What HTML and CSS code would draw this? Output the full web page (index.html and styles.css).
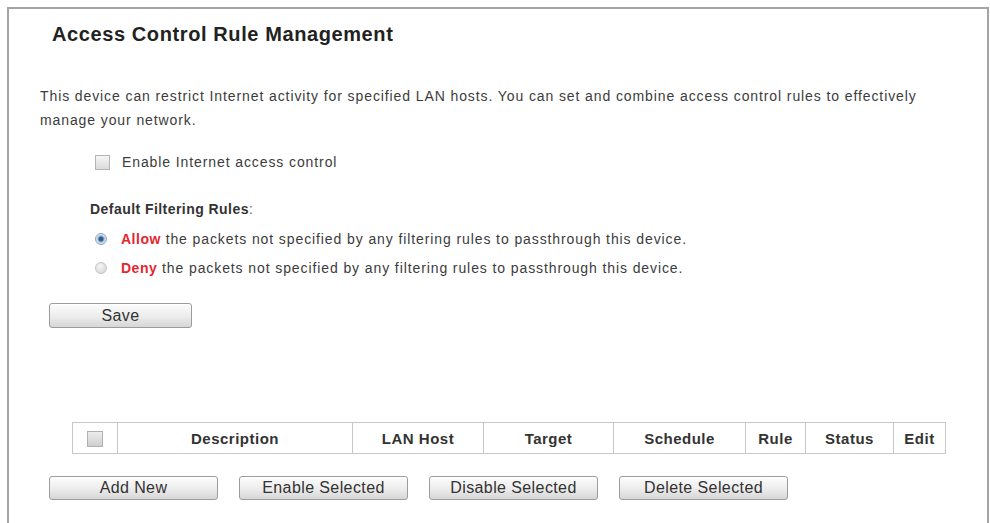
FILE: index.html
```html
<!DOCTYPE html>
<html lang="en">
<head>
  <meta charset="UTF-8">
  <title>Access Control Rule Management</title>
  <link rel="stylesheet" href="styles.css">
</head>
<body>
  <div class="panel">
    <h1>Access Control Rule Management</h1>
    <p class="intro">This device can restrict Internet activity for specified LAN hosts. You can set and combine access control rules to effectively manage your network.</p>

    <label class="enable-row">
      <span class="check"></span>
      Enable Internet access control
    </label>

    <div class="filter">
      <div class="filter-title"><b>Default Filtering Rules</b>:</div>
      <div class="radio-row"><span class="radio on"></span><span class="red">Allow</span>&nbsp;the packets not specified by any filtering rules to passthrough this device.</div>
      <div class="radio-row"><span class="radio"></span><span class="red">Deny</span>&nbsp;the packets not specified by any filtering rules to passthrough this device.</div>
    </div>

    <button class="btn save">Save</button>

    <table class="rules">
      <tr>
        <th class="c-check"><span class="check small"></span></th>
        <th class="c-desc">Description</th>
        <th class="c-host">LAN Host</th>
        <th class="c-target">Target</th>
        <th class="c-sched">Schedule</th>
        <th class="c-rule">Rule</th>
        <th class="c-status">Status</th>
        <th class="c-edit">Edit</th>
      </tr>
    </table>

    <div class="actions">
      <button class="btn wide">Add New</button>
      <button class="btn wide">Enable Selected</button>
      <button class="btn wide">Disable Selected</button>
      <button class="btn wide">Delete Selected</button>
    </div>
  </div>
</body>
</html>
```

FILE: styles.css
```css
body {
  margin: 0;
  background: #fff;
  font-family: "Liberation Sans", Arial, sans-serif;
  color: #333;
}
.panel {
  margin: 7px 0 0 7px;
  width: 982px;
  height: 540px;
  border: 2px solid #a4a4a4;
  border-bottom: none;
  padding: 13px 0 0 31px;
  box-sizing: border-box;
}
h1 {
  margin: 0 0 0 12px;
  font-size: 20px;
  line-height: 24px;
  letter-spacing: 0.6px;
  color: #222;
}
.intro {
  margin: 38px 0 0;
  width: 900px;
  font-size: 14px;
  line-height: 24px;
  letter-spacing: 0.9px;
  color: #3c3c3c;
}
.enable-row {
  display: flex;
  align-items: center;
  margin: 23px 0 0 55px;
  font-size: 14px;
  line-height: 15px;
  letter-spacing: 0.9px;
  color: #3c3c3c;
}
.check {
  display: inline-block;
  width: 13px;
  height: 13px;
  margin-right: 12px;
  border: 1px solid #b4b4b4;
  background: linear-gradient(#f6f6f6, #dadada);
}
.filter {
  margin: 29px 0 0 50px;
}
.filter-title {
  font-size: 14px;
  line-height: 20px;
  letter-spacing: 0.45px;
  color: #666;
  margin-bottom: 5px;
}
.filter-title b {
  color: #333;
}
.radio-row {
  display: flex;
  align-items: center;
  height: 29px;
  margin-left: 5px;
  font-size: 14px;
  letter-spacing: 0.9px;
  color: #3c3c3c;
}
.radio {
  width: 10px;
  height: 10px;
  border-radius: 50%;
  margin-right: 14px;
  border: 1px solid #c4c4c4;
  background: radial-gradient(circle at 40% 35%, #f6f6f6, #d2d2d2);
}
.radio.on {
  background: radial-gradient(circle, #2e5e8c 0 2px, #9fbad4 3px, #e0eaf4 5px);
  border-color: #8aa8c4;
}
.red {
  color: #e3262f;
  font-weight: bold;
  letter-spacing: 0.5px;
}
.btn {
  font-family: "Liberation Sans", Arial, sans-serif;
  font-size: 16px;
  letter-spacing: 0.4px;
  color: #333;
  padding: 0;
  border: 1px solid #9c9c9c;
  border-radius: 3px;
  background: linear-gradient(#fcfcfc, #ececec 55%, #d6d6d6);
  box-shadow: inset 0 1px 0 #fff;
}
.save {
  display: block;
  width: 143px;
  height: 25px;
  margin: 21px 0 0 9px;
}
.rules {
  margin: 94px 0 0 32px;
  border-collapse: collapse;
  font-size: 15px;
  letter-spacing: 0.5px;
}
.rules th {
  height: 30px;
  padding: 0;
  border: 1px solid #c8c8c8;
  color: #333;
}
.c-check { width: 44px; }
.c-desc { width: 234px; }
.c-host { width: 130px; }
.c-target { width: 129px; }
.c-sched { width: 131px; }
.c-rule { width: 59px; }
.c-status { width: 87px; }
.c-edit { width: 51px; }
.check.small {
  width: 14px;
  height: 14px;
  margin: 0;
  vertical-align: middle;
  border-color: #b0b0b0;
  background: linear-gradient(#ececec, #cfcfcf);
}
.actions {
  display: flex;
  gap: 21px;
  margin: 22px 0 0 9px;
}
.wide {
  width: 169px;
  height: 24px;
}
```
